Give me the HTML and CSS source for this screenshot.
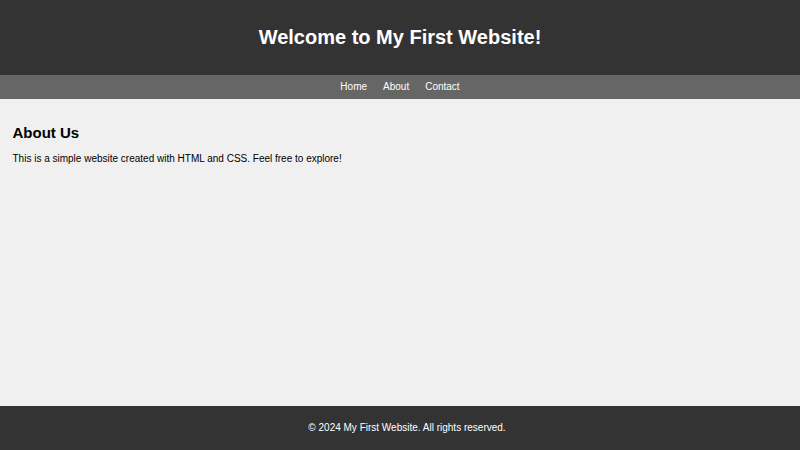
FILE: index.html
```html
<!DOCTYPE html>
<html lang="en">
<head>
<meta charset="utf-8">
<title>My First Website</title>
<link rel="stylesheet" href="styles.css">
</head>
<body>
<header class="site-header">
  <h1 class="site-title">Welcome to My First Website!</h1>
</header>
<nav class="site-nav">
  <a href="#" class="nav-link">Home</a>
  <a href="#" class="nav-link">About</a>
  <a href="#" class="nav-link">Contact</a>
</nav>
<main class="content">
  <h2 class="section-title">About Us</h2>
  <p class="section-text">This is a simple website created with HTML and CSS. Feel free to explore!</p>
</main>
<footer class="site-footer">
  <p class="footer-text">&copy; 2024 My First Website. All rights reserved.</p>
</footer>
</body>
</html>
```
FILE: styles.css
```css
html, body {
  margin: 0;
  padding: 0;
  height: 100%;
}
body {
  font-family: "Liberation Sans", Arial, sans-serif;
  font-size: 10px;
  line-height: 1.15;
  background: #f0f0f0;
  color: #000;
  display: flex;
  flex-direction: column;
  min-height: 100vh;
}
.site-header {
  background: #333333;
  color: #fff;
  text-align: center;
  padding: 12.5px 0;
}
.site-title {
  font-size: 20px;
  font-weight: bold;
  margin: 13.4px 0;
}
.site-nav {
  background: #666666;
  display: flex;
  justify-content: center;
  gap: 16px;
  padding: 6.25px 0;
}
.nav-link {
  color: #fff;
  text-decoration: none;
  font-size: 10px;
}
.content {
  flex: 1;
  padding: 12.5px;
}
.section-title {
  font-size: 15px;
  font-weight: bold;
  margin: 12.45px 0;
}
.section-text {
  margin: 10px 0;
}
.site-footer {
  background: #333333;
  color: #fff;
  height: 44px;
  display: flex;
  align-items: center;
  justify-content: center;
  padding-left: 14px;
}
.footer-text {
  margin: 0;
}
```
